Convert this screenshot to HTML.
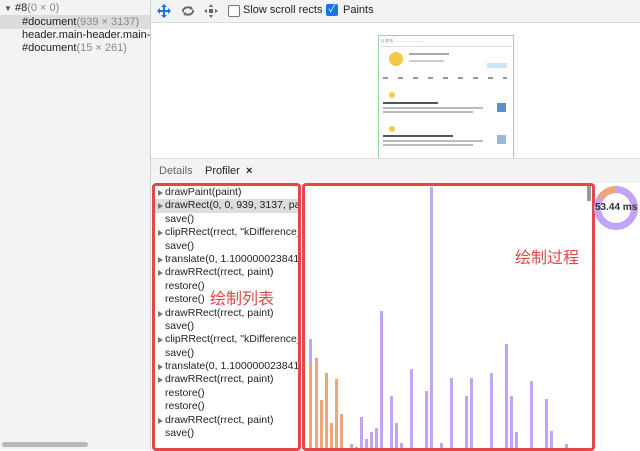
<!DOCTYPE html>
<html><head><meta charset="utf-8"><style>
body{margin:0;width:640px;height:450px;overflow:hidden;background:#fff;font-family:"Liberation Sans","Noto Sans CJK SC",sans-serif;position:relative;font-size:11px;color:#222}
.a{position:absolute}
.lp{left:0;top:0;width:150px;height:450px;background:#f1f3f4;border-right:1px solid #d0d0d0}
.row{position:absolute;left:22px;white-space:nowrap;font-size:11px}
.g{color:#888}
.list div{height:13.4px;line-height:13.4px;white-space:nowrap;padding-left:10px;position:relative;font-size:10.5px}
.list div.t:before{content:"";position:absolute;left:3px;top:4px;border-left:5px solid #777;border-top:3px solid transparent;border-bottom:3px solid transparent}
.b{position:absolute;width:3px;bottom:0;background:#c3a3f3}
.o{background:#eda57c}
</style></head><body>
<div class="a lp"></div>
<div class="a" style="left:4px;top:2px;white-space:nowrap"><span style="font-size:8px;color:#555">▼</span> #8<span class="g">(0 × 0)</span></div>
<div class="a" style="left:0;top:15px;width:150px;height:14px;background:#dcdcdc"></div>
<div class="row" style="top:16px">#document<span class="g">(939 × 3137)</span></div>
<div class="row" style="top:29px;width:128px;overflow:hidden">header.main-header.main-header</div>
<div class="row" style="top:42px">#document<span class="g">(15 × 261)</span></div>
<div class="a" style="left:2px;top:442px;width:86px;height:5px;border-radius:3px;background:#b8b8b8"></div>

<div class="a" style="left:151px;top:0;width:489px;height:22px;background:#f1f3f4;border-bottom:1px solid #ddd"></div>
<svg class="a" style="left:156px;top:3px" width="16" height="16" viewBox="0 0 16 16"><path d="M8 1l3 3H9v3h3V5l3 3-3 3V9H9v3h2l-3 3-3-3h2V9H4v2L1 8l3-3v2h3V4H5z" fill="#1a73e8"/></svg>
<svg class="a" style="left:180px;top:3px" width="16" height="16" viewBox="0 0 16 16"><path d="M3 9a5 4 0 0 1 9-3M13 7a5 4 0 0 1-9 3" fill="none" stroke="#666" stroke-width="2"/><path d="M11 3l2 3-3 1zM5 13l-2-3 3-1z" fill="#666"/></svg>
<svg class="a" style="left:203px;top:3px" width="16" height="16" viewBox="0 0 16 16"><path d="M8 1l2 3H6zM8 15l-2-3h4zM1 8l3-2v4zM15 8l-3 2V6z" fill="#666"/><rect x="6" y="6" width="4" height="4" fill="#666"/></svg>
<div class="a" style="left:228px;top:5px;width:10px;height:10px;border:1px solid #777;border-radius:2px;background:#fff"></div>
<div class="a" style="left:243px;top:4px">Slow scroll rects</div>
<div class="a" style="left:326px;top:4px;width:12px;height:12px;border-radius:2px;background:#1a73e8;color:#fff;font-size:10px;line-height:12px;text-align:center">✓</div>
<div class="a" style="left:343px;top:4px">Paints</div>

<div class="a" style="left:378px;top:35px;width:134px;height:126px;border:1px solid #9ed39e;background:#fff;overflow:hidden">
 <div class="a" style="left:2px;top:2px;width:130px;height:8px;border-bottom:1px solid #ddd;font-size:4px;color:#789">Q 综合 ..........................</div>
 <div class="a" style="left:10px;top:16px;width:14px;height:14px;border-radius:50%;background:#f5c84a"></div>
 <div class="a" style="left:30px;top:17px;width:40px;height:2px;background:#aaa"></div>
 <div class="a" style="left:30px;top:24px;width:35px;height:2px;background:#ccc"></div>
 <div class="a" style="left:108px;top:27px;width:20px;height:5px;background:#cde3f7"></div>
 <div class="a" style="left:4px;top:41px;width:124px;height:2px;background:repeating-linear-gradient(90deg,#999 0 5px,transparent 5px 15px)"></div>
 <div class="a" style="left:10px;top:56px;width:6px;height:6px;border-radius:50%;background:#f5c84a"></div>
 <div class="a" style="left:4px;top:66px;width:55px;height:2px;background:#555"></div>
 <div class="a" style="left:4px;top:71px;width:100px;height:2px;background:#bbb"></div>
 <div class="a" style="left:4px;top:75px;width:90px;height:2px;background:#bbb"></div>
 <div class="a" style="left:118px;top:67px;width:9px;height:9px;background:#5a8fd0"></div>
 <div class="a" style="left:10px;top:90px;width:6px;height:6px;border-radius:50%;background:#f5c84a"></div>
 <div class="a" style="left:4px;top:99px;width:70px;height:2px;background:#555"></div>
 <div class="a" style="left:4px;top:104px;width:100px;height:2px;background:#bbb"></div>
 <div class="a" style="left:4px;top:108px;width:90px;height:2px;background:#bbb"></div>
 <div class="a" style="left:118px;top:99px;width:9px;height:9px;background:#9bb8d8"></div>
</div>

<div class="a" style="left:151px;top:158px;width:489px;height:24px;background:#f1f3f4;border-top:1px solid #ddd"></div>
<div class="a" style="left:159px;top:165px;color:#666">Details</div>
<div class="a" style="left:205px;top:165px;color:#222">Profiler&nbsp; <b>×</b></div>

<div class="a list" style="left:155px;top:186px;width:143px;height:259px;overflow:hidden">
<div class="t">drawPaint(paint)</div>
<div class="t" style="background:#ddd">drawRect(0, 0, 939, 3137, paint)</div>
<div>save()</div>
<div class="t">clipRRect(rrect, "kDifference_Op")</div>
<div>save()</div>
<div class="t">translate(0, 1.100000023841858)</div>
<div class="t">drawRRect(rrect, paint)</div>
<div>restore()</div>
<div>restore()</div>
<div class="t">drawRRect(rrect, paint)</div>
<div>save()</div>
<div class="t">clipRRect(rrect, "kDifference_Op")</div>
<div>save()</div>
<div class="t">translate(0, 1.100000023841858)</div>
<div class="t">drawRRect(rrect, paint)</div>
<div>restore()</div>
<div>restore()</div>
<div class="t">drawRRect(rrect, paint)</div>
<div>save()</div>
</div>
<div class="a" style="left:152px;top:183px;width:143px;height:262px;border:3px solid #e34747;border-radius:4px"></div>
<div class="a" style="left:210px;top:285px;font-size:16px;color:#e34747">绘制列表</div>

<div class="a" style="left:305px;top:183px;width:289px;height:267px;overflow:hidden">
<div class="b" style="left:4px;height:111px"></div>
<div class="b o" style="left:4px;height:86px"></div>
<div class="b o" style="left:10px;height:92px"></div>
<div class="b o" style="left:15px;height:50px"></div>
<div class="b o" style="left:20px;height:77px"></div>
<div class="b o" style="left:25px;height:27px"></div>
<div class="b o" style="left:30px;height:71px"></div>
<div class="b o" style="left:35px;height:36px"></div>
<div class="b" style="left:45px;height:6px"></div>
<div class="b" style="left:50px;height:3px"></div>
<div class="b" style="left:55px;height:33px"></div>
<div class="b" style="left:60px;height:11px"></div>
<div class="b" style="left:65px;height:18px"></div>
<div class="b" style="left:70px;height:22px"></div>
<div class="b" style="left:75px;height:139px"></div>
<div class="b" style="left:85px;height:54px"></div>
<div class="b" style="left:90px;height:27px"></div>
<div class="b" style="left:95px;height:7px"></div>
<div class="b" style="left:105px;height:81px"></div>
<div class="b" style="left:120px;height:59px"></div>
<div class="b" style="left:125px;height:263px"></div>
<div class="b" style="left:135px;height:7px"></div>
<div class="b" style="left:140px;height:2px"></div>
<div class="b" style="left:145px;height:72px"></div>
<div class="b" style="left:160px;height:54px"></div>
<div class="b" style="left:165px;height:72px"></div>
<div class="b" style="left:180px;height:2px"></div>
<div class="b" style="left:185px;height:77px"></div>
<div class="b" style="left:200px;height:106px"></div>
<div class="b" style="left:205px;height:54px"></div>
<div class="b" style="left:210px;height:18px"></div>
<div class="b" style="left:225px;height:69px"></div>
<div class="b" style="left:240px;height:51px"></div>
<div class="b" style="left:245px;height:19px"></div>
<div class="b" style="left:260px;height:6px"></div>
<div class="a" style="left:282px;top:0;width:4px;height:18px;background:#999"></div>
</div>
<div class="a" style="left:302px;top:183px;width:287px;height:262px;border:3px solid #e34747;border-radius:4px"></div>
<div class="a" style="left:515px;top:244px;font-size:16px;color:#e34747">绘制过程</div>

<svg class="a" style="left:593px;top:185px" width="46" height="46" viewBox="0 0 46 46">
<circle cx="23" cy="23" r="18.5" fill="none" stroke="#c3a3f3" stroke-width="7"/>
<path d="M23 4.5A18.5 18.5 0 0 0 7 13.75" fill="none" stroke="#eda57c" stroke-width="7"/>
</svg>
<div class="a" style="left:595px;top:202px;font-size:10px;font-weight:bold;color:#333;white-space:nowrap">53.44 ms</div>
</body></html>
